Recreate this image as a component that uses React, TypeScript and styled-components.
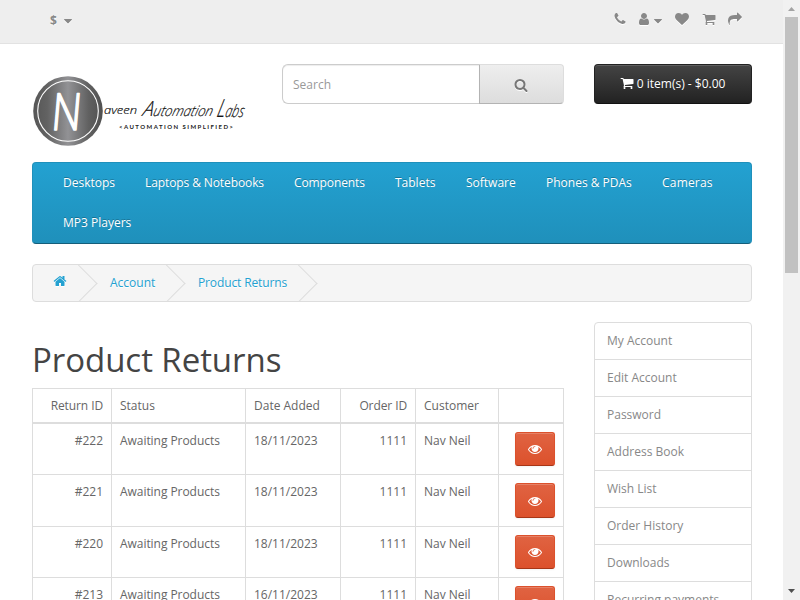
import React from "react";
import styled, { createGlobalStyle } from "styled-components";

const GlobalStyle = createGlobalStyle`
  * { box-sizing: border-box; }
  html, body { margin: 0; padding: 0; overflow: hidden; background: #fff; }
  body {
    font-family: "Open Sans", sans-serif;
    font-size: 12px;
    line-height: 1.42857;
    color: #666;
  }
`;

const paths = {
  cart: "M704 1536q0 52-38 90t-90 38-90-38-38-90 38-90 90-38 90 38 38 90zm896 0q0 52-38 90t-90 38-90-38-38-90 38-90 90-38 90 38 38 90zm128-1088v512q0 24-16.5 42.5t-40.5 21.5l-1044 122q13 60 13 70 0 16-24 64h920q26 0 45 19t19 45-19 45-45 19h-1024q-26 0-45-19t-19-45q0-11 8-31.5t16-36 21.5-40 15.5-29.5l-177-823h-204q-26 0-45-19t-19-45 19-45 45-19h256q16 0 28.5 6.5t19.5 15.5 13 24.5 8 26 5.5 29.5 4.5 26h1201q26 0 45 19t19 45z",
  home: "M1472 992v480q0 26-19 45t-45 19h-384v-384h-256v384h-384q-26 0-45-19t-19-45v-480q0-1 .5-3t.5-3l575-474 575 474q1 2 1 6zm223-69l-62 74q-8 9-21 11h-3q-13 0-21-7l-692-577-692 577q-12 8-24 7-13-2-21-11l-62-74q-8-10-7-23.5t11-21.5l719-599q32-26 76-26t76 26l244 204v-195q0-14 9-23t23-9h192q14 0 23 9t9 23v408l219 182q10 8 11 21.5t-7 23.5z",
  eye: "M1664 960q-152-236-381-353 61 104 61 225 0 185-131.5 316.5t-316.5 131.5-316.5-131.5-131.5-316.5q0-121 61-225-229 117-381 353 133 205 333.5 326.5t434.5 121.5 434.5-121.5 333.5-326.5zm-720-384q0-20-14-34t-34-14q-125 0-214.5 89.5t-89.5 214.5q0 20 14 34t34 14 34-14 14-34q0-86 61-147t147-61q20 0 34-14t14-34zm848 384q0 34-20 69-140 230-376.5 368.5t-499.5 138.5-499.5-139-376.5-368q-20-35-20-69t20-69q140-229 376.5-368t499.5-139 499.5 139 376.5 368q20 35 20 69z",
  search: "M1216 832q0-185-131.5-316.5t-316.5-131.5-316.5 131.5-131.5 316.5 131.5 316.5 316.5 131.5 316.5-131.5 131.5-316.5zm512 832q0 52-38 90t-90 38q-54 0-90-38l-343-342q-179 124-399 124-143 0-273.5-55.5t-225-150-150-225-55.5-273.5 55.5-273.5 150-225 225-150 273.5-55.5 273.5 55.5 225 150 150 225 55.5 273.5q0 220-124 399l343 343q37 37 37 90z",
  heart: "M896 1664q-26 0-44-18l-624-602q-10-8-27.5-26t-55.5-65.5-68-97.5-53.5-121-23.5-138q0-220 127-344t351-124q62 0 126.5 21.5t120 58 95.5 68.5 76 68q36-36 76-68t95.5-68.5 120-58 126.5-21.5q224 0 351 124t127 344q0 221-229 450l-623 600q-18 18-44 18z",
  user: "M1536 1399q0 109-62.5 187t-150.5 78h-854q-88 0-150.5-78t-62.5-187q0-85 8.5-160.5t31.5-152 58.5-131 94-89 134.5-34.5q131 128 313 128t313-128q76 0 134.5 34.5t94 89 58.5 131 31.5 152 8.5 160.5zm-256-887q0 159-112.5 271.5t-271.5 112.5-271.5-112.5-112.5-271.5 112.5-271.5 271.5-112.5 271.5 112.5 112.5 271.5z",
  phone: "M1600 1240q0 27-10 70.5t-21 68.5q-21 50-122 106-94 51-186 51-27 0-53-3.5t-57.5-12.5-47-14.5-55.5-20.5-49-18q-98-35-175-83-127-79-264-216t-216-264q-48-77-83-175-3-9-18-49t-20.5-55.5-14.5-47-12.5-57.5-3.5-53q0-92 51-186 56-101 106-122 25-11 68.5-21t70.5-10q14 0 21 3 18 6 53 76 11 19 30 54t35 63.5 31 53.5q3 4 17.5 25t21.5 35.5 7 28.5q0 20-28.5 50t-62 55-62 53-28.5 46q0 9 5 22.5t8.5 20.5 14 24 11.5 19q76 137 174 235t235 174q2 1 19 11.5t24 14 20.5 8.5 22.5 5q18 0 46-28.5t53-62 55-62 50-28.5q14 0 28.5 7t35.5 21.5 25 17.5q25 15 53.5 31t63.5 35 54 30q70 35 76 53 3 7 3 21z",
  share: "M1792 640q0 26-19 45l-512 512q-19 19-45 19t-45-19-19-45v-256h-224q-98 0-175.5 6t-154 21.5-133 42.5-105.5 69.5-80 101-48.5 138.5-17.5 181q0 55 5 123 0 6 2.5 23.5t2.5 26.5q0 15-8.5 25t-23.5 10q-16 0-28-17-7-9-13-22t-13.5-30-10.5-24q-127-285-127-451 0-199 53-333 162-403 875-403h224v-256q0-26 19-45t45-19 45 19l512 512q19 19 19 45z",
  caret: "M1408 704q0 26-19 45l-448 448q-19 19-45 19t-45-19l-448-448q-19-19-19-45t19-45 45-19h896q26 0 45 19t19 45z",
};

const Glyph = styled.svg<{ $size: number; $gap: number; $drop: number; $shadow?: string }>`
  flex: none;
  width: ${(p) => p.$size}px;
  height: ${(p) => p.$size}px;
  margin-left: ${(p) => p.$gap}px;
  margin-top: ${(p) => p.$drop}px;
  fill: currentColor;
  overflow: visible;
  ${(p) => p.$shadow && `filter: drop-shadow(0 1px 0 ${p.$shadow});`}
`;

type IconProps = { name: keyof typeof paths; size?: number; gap?: number; drop?: number; shadow?: string };
const Icon = ({ name, size = 14, gap = 0, drop = 0, shadow }: IconProps) => (
  <Glyph viewBox="0 0 1792 1792" $size={size} $gap={gap} $drop={drop} $shadow={shadow} aria-hidden="true">
    <path d={paths[name]} />
  </Glyph>
);

const Screen = styled.div`
  display: flex;
  width: 800px;
  height: 600px;
  overflow: hidden;
`;
const Page = styled.div`
  width: 783px;
  height: 600px;
  overflow: hidden;
`;
const Container = styled.div`
  width: 720px;
  margin: 0 31px 0 32px;
`;

const TopBar = styled.nav`
  display: flex;
  justify-content: space-between;
  height: 44px;
  padding: 12px 41px 0 50px;
  background: #eee;
  border-bottom: 1px solid #e2e2e2;
  color: #888;
`;
const Currency = styled.div`
  display: flex;
  align-items: flex-start;
  height: 20px;
  line-height: 18px;
  text-shadow: 0 1px 0 #fff;
`;
const TopLinks = styled.div`
  display: flex;
  align-items: flex-start;
`;

const Header = styled.header`
  display: flex;
  align-items: flex-start;
  height: 118px;
  padding-top: 20px;
`;
const Logo = styled.svg`
  display: block;
  width: 220px;
  height: 74px;
  margin: 10px 30px 0 0;
`;
const SearchGroup = styled.div`
  display: flex;
  width: 282px;
  height: 40px;
`;
const SearchField = styled.input`
  width: 197px;
  height: 40px;
  padding: 0 10px;
  border: 1px solid #ccc;
  border-right: 0;
  border-radius: 6px 0 0 6px;
  font: 12px "Open Sans", sans-serif;
  color: #555;
  outline: none;
  box-shadow: inset 0 1px 1px rgba(0, 0, 0, 0.075);
  &::placeholder { color: #999; opacity: 1; }
`;
const SearchButton = styled.button`
  display: flex;
  align-items: center;
  justify-content: center;
  width: 85px;
  height: 40px;
  padding: 0 1px 0 0;
  color: #777;
  background: linear-gradient(#eee, #ddd);
  border: 1px solid #ddd;
  border-color: #ddd #ddd #b3b3b3 #b3b3b3;
  border-radius: 0 4px 4px 0;
`;
const CartButton = styled.button`
  display: flex;
  justify-content: center;
  width: 158px;
  height: 40px;
  margin-left: 30px;
  padding: 10px 1px 0 0;
  font: 12px/18px "Open Sans", sans-serif;
  color: #fff;
  background: linear-gradient(#444, #222);
  border: 1px solid #222;
  border-color: #222 #222 #111;
  border-radius: 4px;
  box-shadow: inset 0 1px 0 rgba(255, 255, 255, 0.15);
  text-shadow: 0 -1px 0 rgba(0, 0, 0, 0.25);
  white-space: pre;
`;

const Menu = styled.nav`
  display: flex;
  flex-wrap: wrap;
  height: 82px;
  padding: 0 15px;
  background: linear-gradient(#23a1d1, #1f90bb);
  border: 1px solid #1f90bb;
  border-color: #1f90bb #1f90bb #145e7a;
  border-radius: 4px;
`;
const MenuLink = styled.a<{ $width: number; $tracking?: number }>`
  width: ${(p) => p.$width}px;
  height: 40px;
  padding: 10px 0 10px 15px;
  line-height: 20px;
  letter-spacing: ${(p) => p.$tracking ?? 0}px;
  color: #fff;
  white-space: nowrap;
  text-shadow: 0 -1px 0 rgba(0, 0, 0, 0.25);
`;

const Breadcrumb = styled.div`
  display: flex;
  height: 38px;
  margin: 20px 0;
  background: #f5f5f5;
  border: 1px solid #ddd;
  border-radius: 4px;
  overflow: hidden;
`;
const Crumb = styled.div<{ $width: number; $pad: number; $tracking?: number }>`
  position: relative;
  width: ${(p) => p.$width}px;
  padding: 9px 0 0 ${(p) => p.$pad}px;
  line-height: 18px;
  letter-spacing: ${(p) => p.$tracking ?? 0}px;
  color: #23a1d1;
  text-shadow: 0 1px 0 #fff;
  white-space: nowrap;
  &::after {
    content: "";
    position: absolute;
    top: 5px;
    right: -1px;
    width: 26px;
    height: 26px;
    border-right: 1px solid #ddd;
    border-top: 1px solid #ddd;
    transform: rotate(45deg);
  }
`;

const Columns = styled.div`
  display: flex;
  align-items: flex-start;
  gap: 30px;
`;
const Content = styled.main`
  width: 532px;
`;
const Title = styled.h1`
  margin: 20px 0 10px;
  font-size: 33px;
  font-weight: 400;
  line-height: 36px;
  letter-spacing: -0.05px;
  color: #444;
`;
const Table = styled.table`
  width: 531px;
  table-layout: fixed;
  border-collapse: collapse;
  border: 1px solid #ddd;
`;
const Col = styled.col<{ $width: number }>`
  width: ${(p) => p.$width}px;
`;
const Cell = styled.td<{ $right?: boolean; $head?: boolean; $tracking?: number }>`
  padding: 8px;
  border: 1px solid #ddd;
  border-bottom-width: ${(p) => (p.$head ? 2 : 1)}px;
  vertical-align: top;
  text-align: ${(p) => (p.$right ? "right" : "left")};
  letter-spacing: ${(p) => p.$tracking ?? 0}px;
  white-space: nowrap;
`;
const ViewButton = styled.a<{ $height: number }>`
  display: inline-flex;
  align-items: center;
  justify-content: center;
  vertical-align: top;
  width: 40px;
  height: ${(p) => p.$height}px;
  color: #fff;
  background: linear-gradient(#e06342, #dc512c);
  border: 1px solid #dc512c;
  border-color: #dc512c #dc512c #a73617;
  border-radius: 3px;
  box-shadow: inset 0 1px 0 rgba(255, 255, 255, 0.2), 0 1px 2px rgba(0, 0, 0, 0.05);
`;

const SideList = styled.aside`
  width: 158px;
  border: 1px solid #ddd;
  border-radius: 4px;
`;
const SideLink = styled.a`
  display: block;
  height: 37px;
  padding: 9px 12px;
  line-height: 18px;
  color: #888;
  border-bottom: 1px solid #ddd;
`;

const ScrollTrack = styled.div`
  display: flex;
  flex-direction: column;
  justify-content: space-between;
  align-items: center;
  width: 17px;
  height: 600px;
  background: #f1f1f1;
`;
const ScrollThumb = styled.div`
  width: 13px;
  height: 256px;
  margin-top: 6px;
  background: #c1c1c1;
`;
const ScrollTop = styled.div`
  display: flex;
  flex-direction: column;
  align-items: center;
  padding-top: 7px;
`;
const Arrow = styled.svg<{ $bottom?: number }>`
  display: block;
  width: 7px;
  height: 4px;
  margin-bottom: ${(p) => p.$bottom ?? 0}px;
`;

const menu: { label: string; width: number; tracking?: number }[] = [
  { label: "Desktops", width: 82 },
  { label: "Laptops & Notebooks", width: 149, tracking: -0.1 },
  { label: "Components", width: 101, tracking: -0.1 },
  { label: "Tablets", width: 71 },
  { label: "Software", width: 80 },
  { label: "Phones & PDAs", width: 116 },
  { label: "Cameras", width: 81, tracking: 0.2 },
  { label: "MP3 Players", width: 100 },
];
const rows = [
  { id: "#222", date: "18/11/2023", button: 34 },
  { id: "#221", date: "18/11/2023", button: 35 },
  { id: "#220", date: "18/11/2023", button: 34 },
  { id: "#213", date: "16/11/2023", button: 34 },
];
const links = ["My Account", "Edit Account", "Password", "Address Book", "Wish List", "Order History", "Downloads", "Recurring payments"];

const BrandLogo = () => (
  <Logo viewBox="32 74 220 74" role="img" aria-label="Naveen Automation Labs">
    <defs>
      <linearGradient id="disc">
        <stop offset="0" stopColor="#565656" />
        <stop offset="0.2" stopColor="#626262" />
        <stop offset="0.5" stopColor="#929295" />
        <stop offset="0.8" stopColor="#606060" />
        <stop offset="1" stopColor="#505050" />
      </linearGradient>
    </defs>
    <circle cx="68" cy="111" r="34.8" fill="url(#disc)" />
    <circle cx="68" cy="111" r="30.3" fill="none" stroke="#fff" strokeWidth="1.1" />
    <text
      transform="translate(50.5 130) skewX(-5) scale(0.78 1)"
      fontFamily="Open Sans, sans-serif"
      fontSize="51"
      fontWeight="300"
      fill="#fff"
      stroke="#fff"
      strokeWidth="1.6"
      strokeLinejoin="round"
      textLength="38"
      lengthAdjust="spacingAndGlyphs"
    >
      N
    </text>
    <g fontFamily="Open Sans, sans-serif" fontStyle="italic" fontWeight="300" fill="#111" stroke="#111" strokeWidth="0.2">
      <text x="104" y="114" fontSize="11.5" textLength="33" lengthAdjust="spacingAndGlyphs">aveen</text>
      <text transform="translate(142 115.5) skewX(-14)" textLength="70" lengthAdjust="spacingAndGlyphs">
        <tspan fontSize="21">A</tspan>
        <tspan fontSize="14.5">utomation</tspan>
      </text>
      <text transform="translate(216 117) skewX(-14)" textLength="27" lengthAdjust="spacingAndGlyphs">
        <tspan fontSize="25">L</tspan>
        <tspan fontSize="17">abs</tspan>
      </text>
    </g>
    <text x="119" y="129" fontFamily="Lato, sans-serif" fontSize="6" fontWeight="700" fill="#222" textLength="114">
      {"<AUTOMATION SIMPLIFIED>"}
    </text>
  </Logo>
);

export default function App() {
  return (
    <>
      <GlobalStyle />
      <Screen>
        <Page>
          <TopBar>
            <Currency>
              <strong>$</strong>
              <Icon name="caret" gap={4} drop={2} shadow="#fff" />
            </Currency>
            <TopLinks>
              <Icon name="phone" shadow="#fff" />
              <Icon name="user" gap={10} shadow="#fff" />
              <Icon name="caret" drop={2} shadow="#fff" />
              <Icon name="heart" gap={10} shadow="#fff" />
              <Icon name="cart" gap={13} shadow="#fff" />
              <Icon name="share" gap={12} shadow="#fff" />
            </TopLinks>
          </TopBar>
          <Container>
            <Header>
              <BrandLogo />
              <SearchGroup>
                <SearchField placeholder="Search" />
                <SearchButton aria-label="Search">
                  <Icon name="search" drop={2} shadow="#fff" />
                </SearchButton>
              </SearchGroup>
              <CartButton>
                <Icon name="cart" drop={1} />
                <span> 0 item(s) - $0.00</span>
              </CartButton>
            </Header>
            <Menu>
              {menu.map((item) => (
                <MenuLink key={item.label} $width={item.width} $tracking={item.tracking}>
                  {item.label}
                </MenuLink>
              ))}
            </Menu>
            <Breadcrumb>
              <Crumb $width={58} $pad={20}>
                <Icon name="home" shadow="#fff" />
              </Crumb>
              <Crumb $width={88} $pad={19}>Account</Crumb>
              <Crumb $width={132} $pad={19} $tracking={-0.13}>Product Returns</Crumb>
            </Breadcrumb>
            <Columns>
              <Content>
                <Title>Product Returns</Title>
                <Table>
                  <colgroup>
                    {[79, 134, 95, 75, 83, 65].map((w, i) => (
                      <Col key={i} $width={w} />
                    ))}
                  </colgroup>
                  <thead>
                    <tr>
                      <Cell $head $right $tracking={-0.1}>Return ID</Cell>
                      <Cell $head>Status</Cell>
                      <Cell $head>Date Added</Cell>
                      <Cell $head $right $tracking={-0.1}>Order ID</Cell>
                      <Cell $head>Customer</Cell>
                      <Cell $head />
                    </tr>
                  </thead>
                  <tbody>
                    {rows.map((row) => (
                      <tr key={row.id}>
                        <Cell $right>{row.id}</Cell>
                        <Cell $tracking={-0.05}>Awaiting Products</Cell>
                        <Cell>{row.date}</Cell>
                        <Cell $right>1111</Cell>
                        <Cell>Nav Neil</Cell>
                        <Cell $right>
                          <ViewButton $height={row.button} aria-label="View">
                            <Icon name="eye" />
                          </ViewButton>
                        </Cell>
                      </tr>
                    ))}
                  </tbody>
                </Table>
              </Content>
              <SideList>
                {links.map((label) => (
                  <SideLink key={label}>{label}</SideLink>
                ))}
              </SideList>
            </Columns>
          </Container>
        </Page>
        <ScrollTrack>
          <ScrollTop>
            <Arrow viewBox="0 0 7 4">
              <path d="M0 4L3.5 0L7 4Z" fill="#a3a3a3" />
            </Arrow>
            <ScrollThumb />
          </ScrollTop>
          <Arrow viewBox="0 0 7 4" $bottom={7}>
            <path d="M0 0L3.5 4L7 0Z" fill="#505050" />
          </Arrow>
        </ScrollTrack>
      </Screen>
    </>
  );
}
